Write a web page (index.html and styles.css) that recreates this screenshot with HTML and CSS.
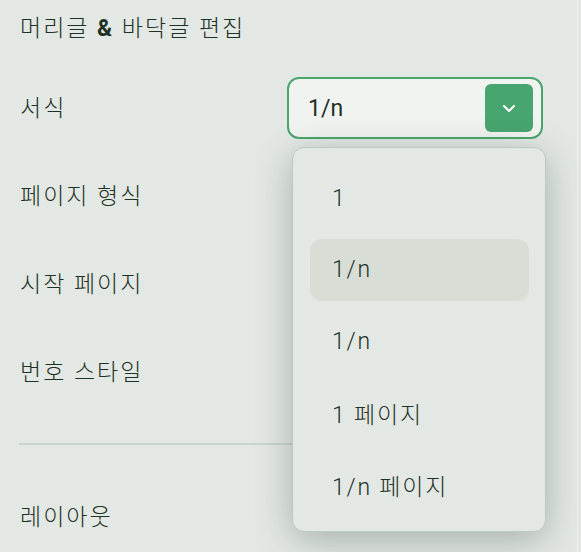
FILE: index.html
```html
<!DOCTYPE html>
<html lang="ko">
<head>
   <meta charset="UTF-8">
   <meta name="viewport" content="width=device-width, initial-scale=1.0">
   <title>머리글 &amp; 바닥글 편집</title>
   <link rel="stylesheet" href="styles.css">
</head>
<body>
   <div class="panel">
      <h1 class="title">머리글 <b>&amp;</b> 바닥글 편집</h1>
      <div class="row">
         <span class="label">서식</span>
         <div class="select">
            <span class="select-value">1/n</span>
            <span class="select-btn">
               <svg width="14" height="9" viewBox="0 0 14 9"><path d="M2 2l5 5 5-5" fill="none" stroke="#fff" stroke-width="2" stroke-linecap="round" stroke-linejoin="round"/></svg>
            </span>
         </div>
      </div>
      <div class="row"><span class="label">페이지 형식</span></div>
      <div class="row"><span class="label">시작 페이지</span></div>
      <div class="row"><span class="label">번호 스타일</span></div>
      <hr class="divider">
      <div class="row"><span class="label">레이아웃</span></div>

      <ul class="menu">
         <li class="menu-item">1</li>
         <li class="menu-item active">1/n</li>
         <li class="menu-item">1/n</li>
         <li class="menu-item">1 페이지</li>
         <li class="menu-item">1/n 페이지</li>
      </ul>
   </div>
</body>
</html>
```

FILE: styles.css
```css
* {
   margin: 0;
   padding: 0;
   box-sizing: border-box;
   font-family: Roboto, "Noto Sans CJK KR", sans-serif;
}
body {
   background-color: #e3e8e4;
   color: #1e3125;
   overflow: hidden;
}
.panel {
   position: relative;
   width: 578px;
   height: 552px;
   padding: 13px 34px 0 20px;
   border-right: 1px solid #eef1ee;
}
.title {
   font-size: 23px;
   font-weight: 300;
   letter-spacing: 2px;
   line-height: 32px;
   margin-bottom: 19px;
}
.title b {
   font-weight: 700;
}
.row {
   display: flex;
   align-items: center;
   justify-content: space-between;
   height: 88px;
}
.label {
   font-size: 23px;
   font-weight: 300;
   letter-spacing: 2px;
   line-height: 1;
}
.select {
   display: flex;
   align-items: center;
   justify-content: space-between;
   width: 256px;
   height: 62px;
   padding: 0 8px 0 19px;
   border: 2px solid #4aa46d;
   border-radius: 12px;
   background-color: #f1f3f0;
}
.select-value {
   font-size: 23px;
}
.select-btn {
   display: flex;
   align-items: center;
   justify-content: center;
   width: 48px;
   height: 48px;
   border-radius: 6px;
   background-color: #47a56f;
}
.divider {
   border: none;
   border-top: 2px solid #cbd5cd;
   margin: 27px 0 28px -1px;
}
.menu {
   position: absolute;
   left: 292px;
   top: 147px;
   width: 254px;
   height: 385px;
   list-style: none;
   display: flex;
   flex-direction: column;
   gap: 9px;
   padding: 19px 16px 15px 17px;
   background-color: #e3e8e4;
   border: 1px solid #bccabf;
   border-radius: 12px;
   box-shadow: 0 8px 36px rgba(40, 62, 46, 0.32);
}
.menu-item {
   display: flex;
   align-items: center;
   height: 63px;
   padding-left: 22px;
   font-size: 23px;
   font-weight: 300;
   letter-spacing: 1.8px;
   border-radius: 12px;
}
.menu-item.active {
   background-color: #d8ddd6;
}
```
